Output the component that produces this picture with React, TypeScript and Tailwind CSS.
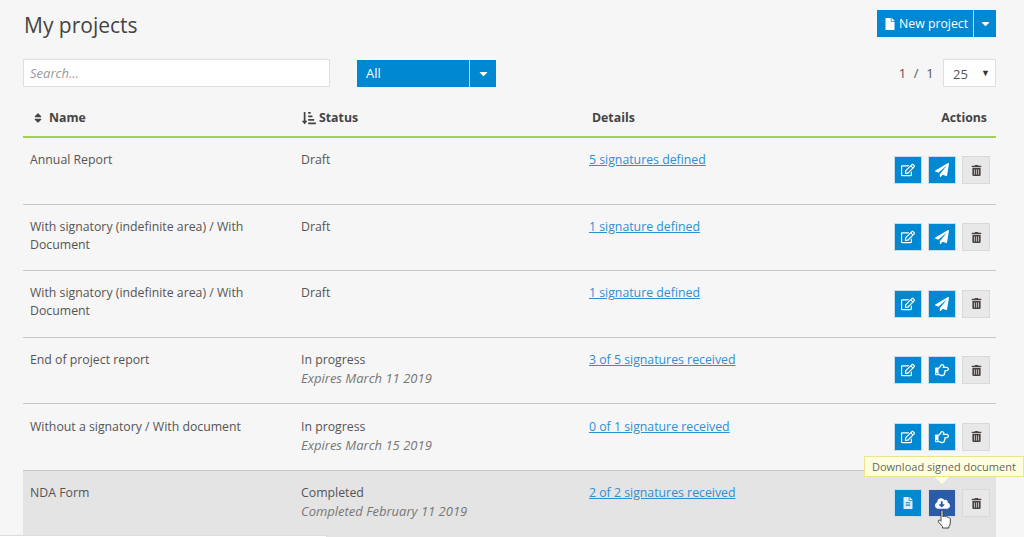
import React from "react";
import { FaRegEdit, FaPaperPlane, FaTrashAlt, FaRegHandPointRight, FaFileAlt, FaCloudDownloadAlt, FaFile, FaSort, FaSortAmountDownAlt, FaCaretDown } from "react-icons/fa";

type Row = { name: string[]; status: string; sub?: string; link: string; mode: "send" | "hand" | "done" };

const rows: Row[] = [
  { name: ["Annual Report"], status: "Draft", link: "5 signatures defined", mode: "send" },
  { name: ["With signatory (indefinite area) / With", "Document"], status: "Draft", link: "1 signature defined", mode: "send" },
  { name: ["With signatory (indefinite area) / With", "Document"], status: "Draft", link: "1 signature defined", mode: "send" },
  { name: ["End of project report"], status: "In progress", sub: "Expires March 11 2019", link: "3 of 5 signatures received", mode: "hand" },
  { name: ["Without a signatory / With document"], status: "In progress", sub: "Expires March 15 2019", link: "0 of 1 signature received", mode: "hand" },
  { name: ["NDA Form"], status: "Completed", sub: "Completed February 11 2019", link: "2 of 2 signatures received", mode: "done" },
];

function Btn({ children, dark, gray }: { children: React.ReactNode; dark?: boolean; gray?: boolean }) {
  const c = gray
    ? "bg-[#e8e8e8] text-[#4a4340] border-[#d9d9d9]"
    : dark
    ? "bg-[#2a5ca8] text-white border-[#d5dde5]"
    : "bg-[#0088d2] text-white border-[#c9dde9]";
  return <div className={`w-[28px] h-[28px] border flex items-center justify-center ${c}`}>{children}</div>;
}

function HandCursor() {
  return (
    <svg width="15" height="19" viewBox="0 0 14 19" className="absolute left-[937px] top-[510px]">
      <path d="M3.5 1.500c0-1.300 2-1.300 2 0V7l0.500-0.500c0.500-0.500 1.500-0.300 1.700 0.300 0.500-0.500 1.500-0.300 1.800 0.400 0.600-0.400 1.500-0.100 1.800 0.600 0.800-0.200 1.500 0.300 1.500 1.200V13c0 1.500-0.500 2.500-1.500 3.500V18H5v-1.500L1 12c-1-1.200 0.500-2.500 1.500-1.700l1 1z" fill="#ffffff" stroke="#333333" strokeWidth="0.900" strokeLinejoin="round" />
    </svg>
  );
}

export default function App() {
  return (
    <div className="relative w-[1024px] h-[537px] overflow-hidden bg-[#f6f6f6] text-[#555555] text-[12.3px] leading-[18px]" style={{ fontFamily: '"Open Sans", sans-serif' }}>
      <div className="pl-[23px] pr-[28px]">
        <div className="flex items-start justify-between h-[59px] pt-[11px]">
          <h1 className="text-[21px] leading-[29px] text-[#444444] pl-[1px]">My projects</h1>
          <div className="flex text-white h-[27px] -mt-[1px]">
            <div className="w-[97px] bg-[#0088d2] flex items-center pl-[7px] gap-[3px] border-r border-[#b5d9ee]">
              <FaFile size={12} />
              <span className="pt-[1px]">New project</span>
            </div>
            <div className="w-[22px] bg-[#0088d2] flex items-center justify-center">
              <FaCaretDown size={13} />
            </div>
          </div>
        </div>

        <div className="flex items-center h-[28px]">
          <div className="w-[307px] h-[28px] bg-white border border-[#dfdfdf] pl-[6px] flex items-center italic text-[#999999] text-[13px]">Search...</div>
          <div className="ml-[27px] w-[139px] h-[27px] flex text-white text-[13px]">
            <div className="w-[113px] bg-[#0088d2] pl-[9px] flex items-center border-r border-[#b5d9ee]">All</div>
            <div className="flex-1 bg-[#0088d2] flex items-center justify-center">
              <FaCaretDown size={13} />
            </div>
          </div>
          <div className="ml-auto flex items-center text-[13px]">
            <span className="mr-[9px] tracking-[0.3px]">1&nbsp;&nbsp;/&nbsp;&nbsp;1</span>
            <div className="w-[53px] h-[28px] bg-white border border-[#dfdfdf] flex items-center justify-between pl-[9px] pr-[5px]">
              <span className="pt-[1px]">25</span>
              <span className="text-[9px] text-[#333333]">▼</span>
            </div>
          </div>
        </div>

        <div className="flex items-center h-[51px] pt-[13px] border-b-2 border-[#a2d050] font-bold text-[#444444]">
          <div className="w-[271px] flex items-center pl-[9px] gap-[5px]">
            <FaSort size={12} />
            <span>Name</span>
          </div>
          <div className="w-[291px] flex items-center pl-[8px] gap-[3px]">
            <FaSortAmountDownAlt size={14} />
            <span>Status</span>
          </div>
          <div className="flex-1 pl-[7px]">Details</div>
          <div className="pr-[9px]">Actions</div>
        </div>

        {rows.map((r, i) => (
          <div key={i} className={`flex h-[66.6px] pt-[13.2px] ${i < rows.length - 1 ? "border-b border-[#c8c8c8]" : ""} ${r.mode === "done" ? "bg-[#e4e4e4]" : ""} ${i === 4 ? "border-[#aaaaaa]" : ""}`}>
            <div className="w-[271px] pl-[7px]">
              {r.name.map((n) => (
                <div key={n}>{n}</div>
              ))}
            </div>
            <div className="w-[289px] pl-[7px]">
              <div>{r.status}</div>
              {r.sub && <div className="italic text-[13px] text-[#777777]">{r.sub}</div>}
            </div>
            <div className="flex-1 pl-[6px]">
              <span className="text-[#2d8fd5] underline">{r.link}</span>
            </div>
            <div className="flex gap-[6px] pt-[5.3px] pr-[6px] w-[102px] justify-end">
              <Btn>{r.mode === "done" ? <FaFileAlt size={12} className="text-[#dbeefa]" /> : <FaRegEdit size={14} />}</Btn>
              <Btn dark={r.mode === "done"}>
                {r.mode === "send" ? <FaPaperPlane size={14} /> : r.mode === "hand" ? <FaRegHandPointRight size={14} /> : <FaCloudDownloadAlt size={15} />}
              </Btn>
              <Btn gray>
                <FaTrashAlt size={11} />
              </Btn>
            </div>
          </div>
        ))}
      </div>

      <div className="absolute left-[864px] top-[456px] h-[21px] px-[7px] bg-[#ffffdf] border border-[#eee48c] text-[11px] leading-[19px] text-[#666666] whitespace-nowrap">
        Download signed document
      </div>
      <div className="absolute left-[935px] top-[477px] w-0 h-0 border-l-[7px] border-r-[7px] border-t-[7px] border-l-transparent border-r-transparent border-t-[#ffffdf]" />
      <HandCursor />
      <div className="absolute left-0 top-[535px] w-[327px] h-[2px] bg-white border-t border-r border-[#dddddd]" />
    </div>
  );
}
